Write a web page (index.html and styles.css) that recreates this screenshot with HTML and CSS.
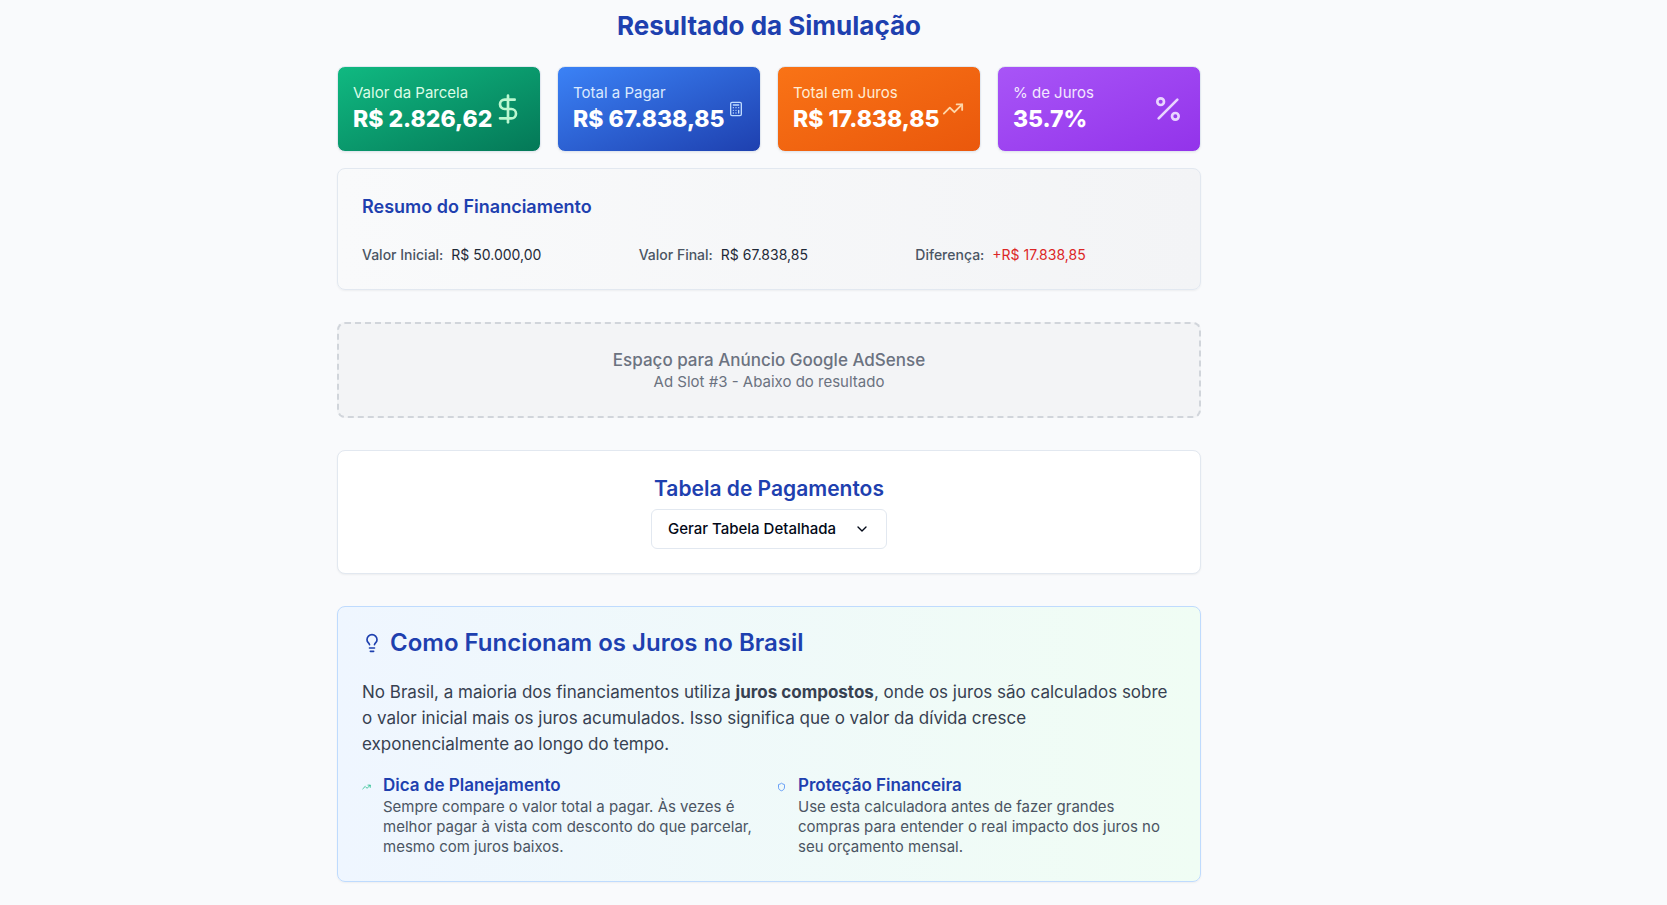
FILE: index.html
```html
<!DOCTYPE html>
<html lang="pt-BR">
<head>
<meta charset="utf-8">
<meta name="viewport" content="width=device-width, initial-scale=1">
<title>Resultado da Simulação</title>
<link rel="stylesheet" href="styles.css">
</head>
<body>
<div class="page">
  <main class="content">
    <section class="result">
      <h1 class="result-title">Resultado da Simulação</h1>
      <div class="stats">
        <article class="stat stat-green">
          <div class="stat-text"><p class="stat-label">Valor da Parcela</p><p class="stat-value">R$ 2.826,62</p></div>
          <svg class="icon icon-lg" viewBox="0 0 24 24" aria-hidden="true"><path d="M12 2v20"/><path d="M17 5H9.500a3.500 3.500 0 0 0 0 7h5a3.500 3.500 0 0 1 0 7H6"/></svg>
        </article>
        <article class="stat stat-blue">
          <div class="stat-text"><p class="stat-label">Total a Pagar</p><p class="stat-value">R$ 67.838,85</p></div>
          <svg class="icon icon-sm" viewBox="0 0 24 24" aria-hidden="true"><rect width="16" height="20" x="4" y="2" rx="2"/><path d="M8 6h8M16 14v4M16 10h.01M12 10h.01M8 10h.01M12 14h.01M8 14h.01M12 18h.01M8 18h.01"/></svg>
        </article>
        <article class="stat stat-orange">
          <div class="stat-text"><p class="stat-label">Total em Juros</p><p class="stat-value">R$ 17.838,85</p></div>
          <svg class="icon icon-md" viewBox="0 0 24 24" aria-hidden="true"><path d="m22 7-8.500 8.500-5-5L2 17"/><path d="M16 7h6v6"/></svg>
        </article>
        <article class="stat stat-purple">
          <div class="stat-text"><p class="stat-label">% de Juros</p><p class="stat-value">35.7%</p></div>
          <svg class="icon icon-lg" viewBox="0 0 24 24" aria-hidden="true"><path d="M19 5 5 19"/><circle cx="6.500" cy="6.500" r="2.500"/><circle cx="17.500" cy="17.500" r="2.500"/></svg>
        </article>
      </div>
      <section class="card summary">
        <h2 class="summary-title">Resumo do Financiamento</h2>
        <dl class="summary-list">
          <div class="summary-item"><dt>Valor Inicial:</dt><dd>R$ 50.000,00</dd></div>
          <div class="summary-item"><dt>Valor Final:</dt><dd>R$ 67.838,85</dd></div>
          <div class="summary-item summary-diff"><dt>Diferença:</dt><dd>+R$ 17.838,85</dd></div>
        </dl>
      </section>
    </section>
    <aside class="ad">
      <p class="ad-title">Espaço para Anúncio Google AdSense</p>
      <p class="ad-slot">Ad Slot #3 - Abaixo do resultado</p>
    </aside>
    <section class="card payments">
      <h2 class="payments-title">Tabela de Pagamentos</h2>
      <button class="button" type="button">Gerar Tabela Detalhada
        <svg class="icon icon-sm" viewBox="0 0 24 24" aria-hidden="true"><path d="m6 9 6 6 6-6"/></svg>
      </button>
    </section>
    <section class="card info">
      <h2 class="info-title">
        <svg class="icon icon-bulb" viewBox="0 0 24 24" aria-hidden="true"><path d="M15 14c.2-1 .7-1.700 1.500-2.500 1-.9 1.500-2.200 1.500-3.500A6 6 0 0 0 6 8c0 1 .2 2.200 1.500 3.500.7.7 1.300 1.500 1.500 2.500"/><path d="M9 18h6M10 22h4"/></svg>
        Como Funcionam os Juros no Brasil
      </h2>
      <p class="info-text">No Brasil, a maioria dos financiamentos utiliza <strong>juros compostos</strong>, onde os juros são calculados sobre o valor inicial mais os juros acumulados. Isso significa que o valor da dívida cresce exponencialmente ao longo do tempo.</p>
      <div class="tips">
        <article class="tip">
          <svg class="icon icon-tip tip-green" viewBox="0 0 24 24" aria-hidden="true"><path d="m22 7-8.500 8.500-5-5L2 17"/><path d="M16 7h6v6"/></svg>
          <div><h3 class="tip-title">Dica de Planejamento</h3><p class="tip-text">Sempre compare o valor total a pagar. Às vezes é melhor pagar à vista com desconto do que parcelar, mesmo com juros baixos.</p></div>
        </article>
        <article class="tip">
          <svg class="icon icon-tip tip-blue" viewBox="0 0 24 24" aria-hidden="true"><path d="M20 13c0 5-3.500 7.500-7.660 8.950a1 1 0 0 1-.67-.01C7.500 20.500 4 18 4 13V6a1 1 0 0 1 1-1c2 0 4.500-1.200 6.240-2.720a1.170 1.170 0 0 1 1.520 0C14.510 3.810 17 5 19 5a1 1 0 0 1 1 1z"/></svg>
          <div><h3 class="tip-title">Proteção Financeira</h3><p class="tip-text">Use esta calculadora antes de fazer grandes compras para entender o real impacto dos juros no seu orçamento mensal.</p></div>
        </article>
      </div>
    </section>
  </main>
</div>
</body>
</html>
```
FILE: styles.css
```css
* { box-sizing: border-box; margin: 0; padding: 0; }
body {
  background: #f9fafc;
  color: #020817;
  font-family: Inter, "Open Sans", sans-serif;
  font-size: 17px;
  line-height: 24px;
}
.page {
  display: grid;
  grid-template-columns: minmax(0, 864px) minmax(0, 129px);
  justify-content: center;
  padding: 10px 0 16px;
}
.content { display: flex; flex-direction: column; gap: 32px; }
.icon {
  flex: none;
  fill: none;
  stroke: currentColor;
  stroke-width: 2;
  stroke-linecap: round;
  stroke-linejoin: round;
}
.icon-sm { width: 16px; height: 16px; }
.icon-md { width: 22px; height: 22px; }
.icon-lg { width: 32px; height: 32px; }
.icon-bulb { width: 20px; height: 20px; }
.icon-tip { width: 9px; height: 24px; margin-top: 2px; }

.result-title {
  margin-bottom: 24px;
  color: #1e40af;
  font-size: 26px;
  line-height: 32px;
  font-weight: 700;
  text-align: center;
}
.stats { display: grid; grid-template-columns: repeat(4, minmax(0, 1fr)); gap: 16px; margin-bottom: 16px; }
.stat {
  display: flex;
  align-items: center;
  justify-content: space-between;
  padding: 16px 16px 16px 15px;
  border: 1px solid #e2e8f0;
  border-radius: 8px;
  box-shadow: 0 1px 2px rgba(0, 0, 0, .05);
}
.stat-text { min-width: 0; }
.stat-label { font-size: 15px; line-height: 20px; }
.stat-value { color: #fff; font-size: 23px; line-height: 32px; font-weight: 800; white-space: nowrap; }
.stat-green { background: linear-gradient(to bottom right, #10b981, #047857); color: #bbf7d0; }
.stat-blue { background: linear-gradient(to bottom right, #3b82f6, #1e40af); color: #bfdbfe; }
.stat-orange { background: linear-gradient(to bottom right, #f97316, #ea580c); color: #fed7aa; }
.stat-purple { background: linear-gradient(to bottom right, #a855f7, #9333ea); color: #e9d5ff; }
.stat-green .stat-label { color: #dcfce7; }
.stat-blue .stat-label { color: #dbeafe; }
.stat-orange .stat-label { color: #ffedd5; }
.stat-purple .stat-label { color: #f3e8ff; }

.card {
  padding: 24px;
  border: 1px solid #e2e8f0;
  border-radius: 8px;
  background: #fff;
  box-shadow: 0 1px 2px rgba(0, 0, 0, .05);
}
.summary { background: linear-gradient(to right, #f9fafb, #f3f4f6); }
.summary-title { margin-bottom: 24px; color: #1e40af; font-size: 18px; line-height: 28px; font-weight: 600; }
.summary-list { display: grid; grid-template-columns: repeat(3, minmax(0, 1fr)); gap: 16px; font-size: 14px; line-height: 20px; }
.summary-item { display: flex; gap: 8px; }
.summary-item dt { color: #4b5563; font-weight: 500; }
.summary-item dd { color: #1f2937; }
.summary-diff dd { color: #dc2626; }

.ad {
  padding: 24px;
  border: 2px dashed #d1d5db;
  border-radius: 8px;
  background: #f3f4f6;
  color: #6b7280;
  text-align: center;
}
.ad-title { font-weight: 500; }
.ad-slot { font-size: 15px; line-height: 20px; }

.payments { display: flex; flex-direction: column; align-items: center; gap: 6px; }
.payments-title { color: #1e40af; font-size: 21px; line-height: 28px; font-weight: 600; }
.button {
  display: flex;
  align-items: center;
  gap: 18px;
  height: 40px;
  padding: 0 16px;
  border: 1px solid #e2e8f0;
  border-radius: 6px;
  background: #fff;
  color: #020817;
  font: 500 15px/20px Inter, "Open Sans", sans-serif;
}

.info { padding-top: 20px; border-color: #bfdbfe; background: linear-gradient(to right, #eff6ff, #f0fdf4); }
.info-title { display: flex; align-items: center; gap: 8px; margin-bottom: 20px; color: #1e40af; font-size: 24px; line-height: 32px; font-weight: 600; }
.info-text { margin-bottom: 16px; color: #374151; line-height: 26px; }
.tips { display: grid; grid-template-columns: repeat(2, minmax(0, 1fr)); gap: 16px; }
.tip { display: flex; align-items: flex-start; gap: 12px; }
.tip-green { color: #10b981; }
.tip-blue { color: #3b82f6; }
.tip-title { color: #1e40af; font-size: 17px; line-height: 24px; font-weight: 600; }
.tip-text { color: #4b5563; font-size: 15px; line-height: 20px; }
```
